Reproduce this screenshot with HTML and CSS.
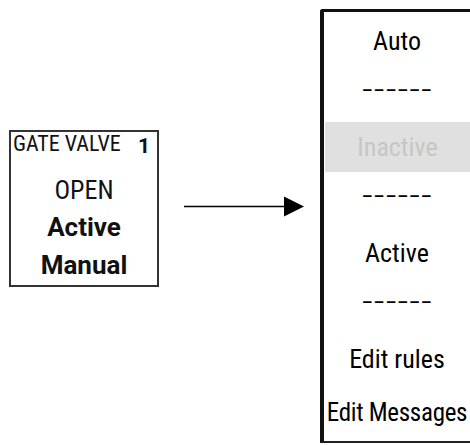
FILE: index.html
```html
<!DOCTYPE html>
<html lang="en">
<head>
    <meta charset="UTF-8">
    <meta name="viewport" content="width=device-width, initial-scale=1.0">
    <title>Gate Valve Menu</title>
    <link rel="stylesheet" href="styles.css">
</head>
<body>

<div id="stage">
    <div class="valve">
        <div class="valve-head">
            <span>GATE VALVE</span>
            <strong>1</strong>
        </div>
        <div class="valve-state">OPEN</div>
        <div class="valve-mode first">Active</div>
        <div class="valve-mode">Manual</div>
    </div>

    <svg class="arrow" width="120" height="21" viewBox="0 0 120 21">
        <line x1="0" y1="10.5" x2="102" y2="10.5" stroke="#000" stroke-width="1.5"/>
        <polygon points="100,0.5 120,10.5 100,20.5" fill="#000"/>
    </svg>

    <ul id="menu">
        <li>Auto</li>
        <li class="sep">------</li>
        <li class="disabled">Inactive</li>
        <li class="sep">------</li>
        <li>Active</li>
        <li class="sep">------</li>
        <li>Edit rules</li>
        <li class="long">Edit Messages</li>
    </ul>
</div>

</body>
</html>
```

FILE: styles.css
```css
body {
    margin: 0;
    padding: 0;
    background-color: #fff;
    overflow: hidden;
    font-family: Roboto, "Liberation Sans", Arial, sans-serif;
    color: #000;
}

#stage {
    display: flex;
    align-items: flex-start;
    width: 470px;
    height: 445px;
}

.valve {
    margin: 130px 0 0 9px;
    width: 146px;
    height: 153px;
    border: 2px solid #333;
    color: #111;
}

.valve-head {
    display: flex;
    justify-content: space-between;
    align-items: baseline;
    padding: 0 7px 0 2px;
    font-size: 22px;
    font-stretch: 85%;
    line-height: 24px;
}

.valve-head strong {
    font-size: 21px;
    font-stretch: 100%;
    position: relative;
    top: 2px;
}

.valve-state {
    margin-top: 21px;
    font-size: 26px;
    font-stretch: 78%;
    line-height: 26px;
    text-align: center;
}

.valve-mode {
    margin-top: 12px;
    font-size: 26px;
    font-weight: bold;
    font-stretch: 90%;
    line-height: 26px;
    text-align: center;
}

.valve-mode.first {
    margin-top: 11px;
}

.arrow {
    margin: 196px 0 0 25px;
    flex-shrink: 0;
}

#menu {
    list-style-type: none;
    margin: 9px 0 0 16px;
    padding: 3px 0 2px 0;
    width: 146px;
    flex-shrink: 0;
    border-top: 3px solid #111;
    border-left: 4px solid #111;
    border-bottom: 2px solid #222;
    border-top-left-radius: 3px;
}

#menu li {
    height: 53px;
    line-height: 53px;
    font-size: 26px;
    font-stretch: 75%;
    text-align: center;
    white-space: nowrap;
}

#menu li.long {
    font-size: 25px;
    letter-spacing: -0.3px;
}

#menu li.sep {
    height: 45px;
    line-height: 45px;
    padding-bottom: 8px;
    font-size: 36px;
    font-weight: 300;
    font-stretch: 100%;
    letter-spacing: 1.5px;
    text-indent: 1.5px;
}

#menu li.disabled {
    height: 50px;
    line-height: 50px;
    margin: 1px 0 2px 1px;
    background-color: #e0e0e0;
    color: #c6c6c6;
}
```
